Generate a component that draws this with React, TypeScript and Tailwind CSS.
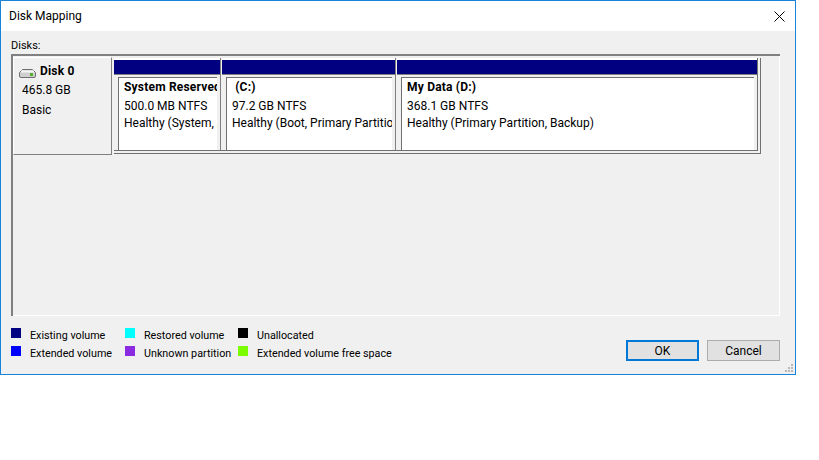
import React from "react";

const parts = [
  { w: "w-[108px]", inner: "w-[99px]", sep: true, name: "System Reserved", size: "500.0 MB NTFS", status: "Healthy (System, Active, Primary Partition)" },
  { w: "w-[175px]", inner: "w-[166px]", sep: true, name: " (C:)", size: "97.2 GB NTFS", status: "Healthy (Boot, Primary Partition)" },
  { w: "w-[360px]", inner: "w-[353px]", sep: false, name: "My Data (D:)", size: "368.1 GB NTFS", status: "Healthy (Primary Partition, Backup)" },
];

const legend = [
  { color: "bg-[#000080]", label: "Existing volume" },
  { color: "bg-[#00ffff]", label: "Restored volume" },
  { color: "bg-[#000000]", label: "Unallocated" },
  { color: "bg-[#0000ff]", label: "Extended volume" },
  { color: "bg-[#8a2be2]", label: "Unknown partition" },
  { color: "bg-[#7cfc00]", label: "Extended volume free space" },
];

const DiskIcon = () => (
  <svg width="17" height="9" viewBox="0 0 17 9" className="block">
    <path d="M3.5 0.5 H13.5 L16.5 3.5 V7 Q16.5 8.5 15 8.5 H2 Q0.5 8.5 0.5 7 V3.5 Z" fill="#cfcfcf" stroke="#6f6f6f" />
    <path d="M2 2.5 H15" stroke="#f4f4f4" strokeWidth="2" />
    <rect x="11" y="4" width="3" height="3" fill="#55b030" />
  </svg>
);

const App: React.FC = () => {
  return (
    <div className="w-[819px] h-[460px] bg-white font-['Roboto',sans-serif] text-[12px] leading-[16px] text-black">
      <div className="w-[796px] h-[375px] border border-[#1883d7] flex flex-col bg-[#f0f0f0]">
        <div className="h-[30px] bg-white flex items-center justify-between pl-[8px] pr-[9px] shrink-0">
          <span>Disk Mapping</span>
          <svg width="11" height="11" viewBox="0 0 11 11" className="mr-px">
            <path d="M0.5 0.5 L10.5 10.5 M10.5 0.5 L0.5 10.5" stroke="#000" strokeWidth="1" fill="none" />
          </svg>
        </div>
        <div className="pl-[10px] pt-[7px] h-[23px] text-[11px] shrink-0">Disks:</div>
        <div className="ml-[10px] w-[769px] h-[262px] border-l-2 border-t-2 border-[#808080] shrink-0">
          <div className="h-full border-r border-b border-[#ffffff] -mb-px flex items-start pt-px">
            <div className="w-[99px] h-[98px] border-t border-l border-white border-r border-b border-r-[#808080] border-b-[#808080] pl-[5px] pt-[5px] shrink-0">
              <div className="flex items-center gap-[4px] h-[16px]">
                <span className="mt-[4px]"><DiskIcon /></span>
                <span className="font-bold tracking-[0.2px]">Disk 0</span>
              </div>
              <div className="pl-[3px] mt-[3px]">465.8 GB</div>
              <div className="pl-[3px] mt-[4px]">Basic</div>
            </div>
            <div className="ml-[2px] mt-px w-[647px] border-r border-b border-[#707070] pr-[2px] pb-[2px] shrink-0 flex">
              <div className="flex border-r border-b border-[#707070]">
                {parts.map((p) => (
                  <div key={p.name} className={`${p.w} ${p.sep ? "pr-px" : ""} shrink-0`}>
                    <div className={`h-[92px] ${p.sep ? "border-r border-[#808080]" : ""}`}>
                      <div className="h-[2px] bg-white" />
                      <div className="h-[15px] bg-[#000080] border-b border-[#808080]" />
                      <div className={`${p.inner} ml-[4px] mt-[2px] h-[73px] bg-white border-t border-l border-[#707070] overflow-hidden pl-[5px] pt-px whitespace-nowrap`}>
                        <div className="font-bold tracking-[0.2px] whitespace-pre">{p.name}</div>
                        <div className="mt-[3px]">{p.size}</div>
                        <div className="mt-px">{p.status}</div>
                      </div>
                    </div>
                  </div>
                ))}
              </div>
            </div>
          </div>
        </div>
        <div className="relative flex-1 flex justify-between pl-[10px] pr-[15px]">
          <div className="grid grid-cols-[114px_113px_auto] gap-y-[8px] pt-[12px] h-fit text-[10.75px] leading-[10px]">
            {legend.map((l) => (
              <div key={l.label} className="flex h-[10px] whitespace-nowrap">
                <span className={`${l.color} w-[10px] h-[10px] mr-[9px] shrink-0`} />
                <span className="pt-[3px]">{l.label}</span>
              </div>
            ))}
          </div>
          <div className="flex gap-[8px] pt-[24px]">
            <button className="w-[73px] h-[21px] bg-[#e1e1e1] border-2 border-[#0078d7]">OK</button>
            <button className="w-[73px] h-[21px] bg-[#e1e1e1] border border-[#adadad]">Cancel</button>
          </div>
          <svg width="9" height="9" viewBox="0 0 9 9" className="absolute right-[1px] bottom-[1px]">
            <path d="M6 0h2v2H6z M3 3h2v2H3z M6 3h2v2H6z M0 6h2v2H0z M3 6h2v2H3z M6 6h2v2H6z" fill="#b8b8b8" />
          </svg>
        </div>
      </div>
    </div>
  );
};

export default App;
